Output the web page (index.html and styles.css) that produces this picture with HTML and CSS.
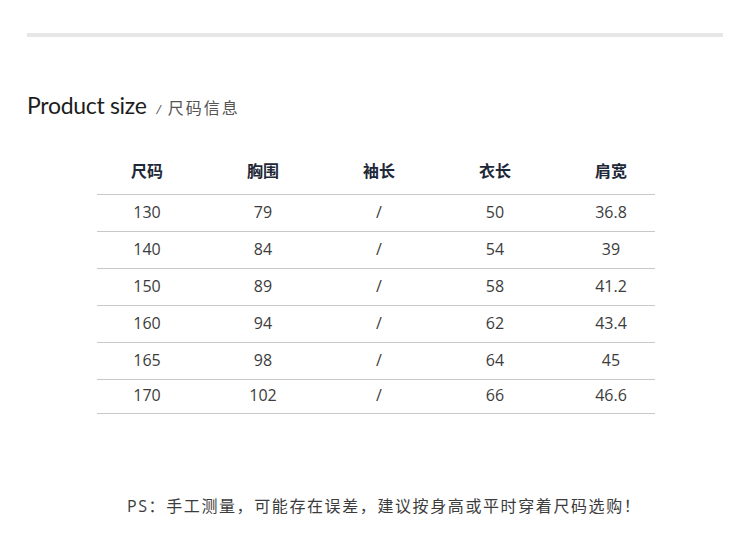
FILE: index.html
```html
<!DOCTYPE html>
<html>
<head>
<meta charset="utf-8">
<link rel="stylesheet" href="styles.css">
</head>
<body>
<div class="page">
  <div class="topbar"></div>
  <h1 class="title"><span class="en">Product size</span><span class="sep">/</span><span class="cn">尺码信息</span></h1>
  <div class="table">
    <div class="row head"><div class="cells">
      <div class="cell">尺码</div><div class="cell">胸围</div><div class="cell">袖长</div><div class="cell">衣长</div><div class="cell">肩宽</div>
    </div></div>
    <div class="row"><div class="cells"><div class="cell">130</div><div class="cell">79</div><div class="cell">/</div><div class="cell">50</div><div class="cell">36.8</div></div></div>
    <div class="row"><div class="cells"><div class="cell">140</div><div class="cell">84</div><div class="cell">/</div><div class="cell">54</div><div class="cell">39</div></div></div>
    <div class="row"><div class="cells"><div class="cell">150</div><div class="cell">89</div><div class="cell">/</div><div class="cell">58</div><div class="cell">41.2</div></div></div>
    <div class="row"><div class="cells"><div class="cell">160</div><div class="cell">94</div><div class="cell">/</div><div class="cell">62</div><div class="cell">43.4</div></div></div>
    <div class="row"><div class="cells"><div class="cell">165</div><div class="cell">98</div><div class="cell">/</div><div class="cell">64</div><div class="cell">45</div></div></div>
    <div class="row last"><div class="cells"><div class="cell">170</div><div class="cell">102</div><div class="cell">/</div><div class="cell">66</div><div class="cell">46.6</div></div></div>
  </div>
  <p class="note">PS：手工测量，可能存在误差，建议按身高或平时穿着尺码选购！</p>
</div>
</body>
</html>
```
FILE: styles.css
```css
* { box-sizing: border-box; }
html, body { margin: 0; padding: 0; background: #fff; }
body { width: 750px; height: 549px; overflow: hidden; font-family: "Open Sans", "Noto Sans CJK SC", sans-serif; color: #444; }
.page { padding: 33px 27px 0 27px; }
.topbar { height: 4px; background: #e6e6e6; }
.title { margin: 54px 0 0 0; font-weight: 400; display: flex; align-items: baseline; height: 30px; }
.title .en { font-family: "Lato", "Noto Sans", sans-serif; font-size: 23px; color: #1d1d1d; letter-spacing: -0.3px; }
.title .sep { font-size: 12px; color: #555; margin: 0 7px 0 10px; font-style: italic; }
.title .cn { font-family: "Noto Sans CJK SC", sans-serif; font-size: 16px; color: #555; letter-spacing: 2px; }
.table { width: 558px; margin: 26px 0 0 70px; }
.row { height: 37px; border-bottom: 1.5px solid #c8c8c8; display: flex; align-items: center; padding-bottom: 3px; }
.cells { display: grid; grid-template-columns: repeat(5, 116px); margin: 0 -14px 0 -8px; width: 580px; }
.row.head { height: 48px; align-items: flex-end; padding-bottom: 14px; }
.row.last { height: 34px; }
.cell { text-align: center; font-size: 16px; line-height: 20px; color: #3c3c3c; }
.head .cell { font-family: "Noto Sans CJK SC", sans-serif; font-weight: 700; font-size: 16px; color: #1e2838; }
.note { margin: 79px 0 0 100px; font-size: 16px; letter-spacing: 1.6px; color: #3c3c3c; font-family: "Open Sans", "Noto Sans CJK SC", sans-serif; }
```
